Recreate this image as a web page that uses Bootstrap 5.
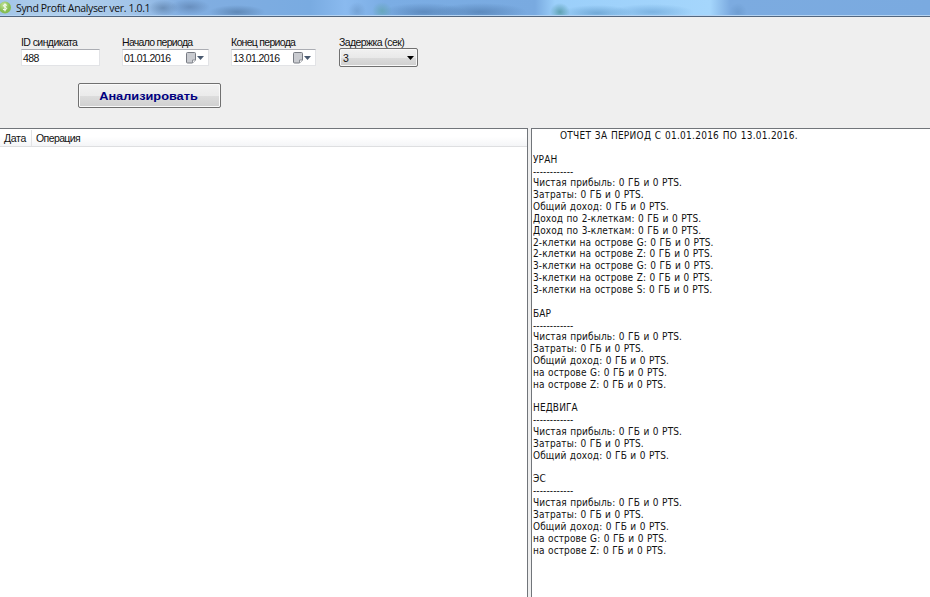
<!DOCTYPE html>
<html lang="ru">
<head>
  <meta charset="UTF-8" />
  <meta name="viewport" content="width=device-width, initial-scale=1.0"/>
  <title>Synd Profit Analyser ver. 1.0.1</title>
  <link href="https://cdn.jsdelivr.net/npm/bootstrap@5.3.2/dist/css/bootstrap.min.css" rel="stylesheet" />
  <style>
    body {
      background-color: #efefef;
      color: #111;
      font-family: "Liberation Sans", Arial, sans-serif;
      font-size: 10.5px;
      line-height: 13px;
      letter-spacing: -0.6px;
    }
    .titlebar {
      height: 17px;
      border-bottom: 1px solid #53677f;
      box-shadow: inset 0 -1px #b5d3f1;
      font-family: "Open Sans", sans-serif;
      font-size: 10.5px;
      letter-spacing: -0.36px;
      background:
        radial-gradient(ellipse 15px 8px at 163px 8px, #4f6f9588, transparent),
        radial-gradient(ellipse 20px 8px at 190px 7px, #5274a088, transparent),
        radial-gradient(ellipse 28px 7px at 237px 12px, #456a9488, transparent),
        radial-gradient(ellipse 9px 9px at 357px 11px, #567fac55, transparent),
        radial-gradient(ellipse 10px 9px at 382px 11px, #5ea3a9aa, transparent),
        radial-gradient(ellipse 42px 9px at 424px 12px, #446e9f88, transparent),
        radial-gradient(ellipse 47px 9px at 480px 12px, #446e9f88, transparent),
        radial-gradient(ellipse 10px 9px at 560px 12px, #408a8faa, transparent),
        radial-gradient(ellipse 36px 8px at 597px 13px, #4d88b988, transparent),
        radial-gradient(ellipse 42px 8px at 652px 12px, #5d97cb88, transparent),
        radial-gradient(ellipse 9px 9px at 738px 12px, #5b8abd66, transparent),
        linear-gradient(90deg, #a2c5e8 0, #b1cfec 60px, #a3c5e9 130px, #82aee1 180px, #79abe1 310px, #8abaef 345px, #7bade4 385px, #79aae0 535px, #9bcffa 555px, #a5d6fc 710px, #7cabe0 730px, #7aaae0 930px);
    }
    .settings {
      height: 111px;
      padding: 19px 0 0 21px;
    }
    .field label {
      display: block;
      height: 13px;
      white-space: nowrap;
      letter-spacing: -0.58px;
    }
    .w-start label, .w-end label {
      letter-spacing: -0.7px;
    }
    .box {
      height: 17px;
      background: #fff;
      border: 1px solid #e2e3e6;
      border-top-color: #abadb3;
      padding: 1px 4px 0 1px;
    }
    .w-id { width: 79px; margin-right: 22px; }
    .w-start { width: 87px; margin-right: 22px; }
    .w-end { width: 85px; margin-right: 23px; }
    .w-delay { width: 79px; }
    .combo {
      height: 19px;
      margin-top: -1px;
      border: 1px solid #707070;
      border-radius: 2px;
      background: linear-gradient(#f1f1f1, #e9e9e9 50%, #dcdcdc 51%, #cfcfcf);
      box-shadow: inset 0 0 0 1px #f8f8f8;
      padding: 1px 3px 0 3px;
    }
    .analyse {
      width: 143px;
      height: 25px;
      margin: 16px 0 0 57px;
      padding: 2px 2px 0 0;
      border: 1px solid #707070;
      border-radius: 2px;
      background: linear-gradient(#f2f2f2, #ebebeb 50%, #dddddd 51%, #d0d0d0);
      box-shadow: inset 0 0 0 1px #fafafa;
      color: #000080;
      font-size: 11px;
      font-weight: bold;
      letter-spacing: 0;
    }
    .analyse span {
      transform: scaleX(1.16);
    }
    .operations {
      width: 528px;
      background: #fff;
      border-top: 1px solid #71757a;
      border-right: 1px solid #71757a;
    }
    .list-head {
      height: 18px;
      padding-top: 1px;
      background: linear-gradient(#fff 45%, #f4f5f7);
      border-bottom: 1px solid #dedfe1;
    }
    .col-date {
      width: 32px;
      padding-left: 4px;
      border-right: 1px solid #e2e3e5;
      letter-spacing: -0.3px;
    }
    .report {
      margin-left: 3px;
      background: #fff;
      border-top: 1px solid #71757a;
      border-left: 1px solid #71757a;
      padding: 1px 0 0 1px;
      font-family: "DejaVu Sans Condensed", "DejaVu Sans", sans-serif;
      font-stretch: condensed;
      font-size: 10px;
      line-height: 11.85px;
      letter-spacing: 0.12px;
      word-spacing: 0.45px;
    }
    .report pre {
      font: inherit;
      overflow: hidden;
    }
    .report-title {
      padding-left: 27px;
      letter-spacing: 0.27px;
    }
  </style>
</head>
<body class="vh-100 overflow-hidden d-flex flex-column">
  <header class="titlebar d-flex align-items-center flex-shrink-0">
    <svg width="12" height="16" viewBox="0 0 12 16">
      <defs>
        <radialGradient id="coin" cx=".4" cy=".3"><stop offset="0" stop-color="#c4e49a"/><stop offset="1" stop-color="#86bd52"/></radialGradient>
      </defs>
      <circle cx="5" cy="7.5" r="6" fill="url(#coin)"/>
      <path d="M7 5.3Q5 4.2 3.6 5.2C2.5 7 7 6.9 6.7 8.8Q5.5 10.6 3 9.5M5 3.4V11.4" fill="none" stroke="#fff" stroke-width="1"/>
    </svg>
    <span class="ms-1">Synd Profit Analyser ver. 1.0.1</span>
  </header>

  <section class="settings flex-shrink-0">
    <div class="d-flex">
      <div class="field w-id">
        <label>ID синдиката</label>
        <div class="box d-flex align-items-center">488</div>
      </div>
      <div class="field w-start">
        <label>Начало периода</label>
        <div class="box d-flex align-items-center justify-content-between">
          <span>01.01.2016</span>
          <svg width="19" height="12" viewBox="0 0 19 12"><path d="M2.500.5h7q1 0 1 1v6.500l-3 3h-5q-1 0-1-1v-8.500q0-1 1-1z" fill="#c9cbd0" stroke="#777b83"/><path d="M10.500 8h-3v3" fill="#fff" stroke="#8b8f96"/><path d="M12 4h7l-3.500 4z" fill="#4a5a70"/></svg>
        </div>
      </div>
      <div class="field w-end">
        <label>Конец периода</label>
        <div class="box d-flex align-items-center justify-content-between">
          <span>13.01.2016</span>
          <svg width="19" height="12" viewBox="0 0 19 12"><path d="M2.500.5h7q1 0 1 1v6.500l-3 3h-5q-1 0-1-1v-8.500q0-1 1-1z" fill="#c9cbd0" stroke="#777b83"/><path d="M10.500 8h-3v3" fill="#fff" stroke="#8b8f96"/><path d="M12 4h7l-3.500 4z" fill="#4a5a70"/></svg>
        </div>
      </div>
      <div class="field w-delay">
        <label>Задержка (сек)</label>
        <div class="combo d-flex align-items-center justify-content-between">
          <span>3</span>
          <svg width="7" height="4" viewBox="0 0 7 4"><path d="M0 0h7l-3.500 4z" fill="#000"/></svg>
        </div>
      </div>
    </div>
    <button class="analyse d-flex align-items-center justify-content-center" type="button"><span>Анализировать</span></button>
  </section>

  <main class="d-flex flex-grow-1">
    <section class="operations flex-shrink-0">
      <div class="list-head d-flex">
        <div class="col-date d-flex align-items-center">Дата</div>
        <div class="ps-1 d-flex align-items-center">Операция</div>
      </div>
    </section>
    <section class="report flex-grow-1">
      <div class="report-title">ОТЧЕТ ЗА ПЕРИОД С 01.01.2016 ПО 13.01.2016.</div>
      <pre class="m-0">

УРАН
------------
Чистая прибыль: 0 ГБ и 0 PTS.
Затраты: 0 ГБ и 0 PTS.
Общий доход: 0 ГБ и 0 PTS.
Доход по 2-клеткам: 0 ГБ и 0 PTS.
Доход по 3-клеткам: 0 ГБ и 0 PTS.
2-клетки на острове G: 0 ГБ и 0 PTS.
2-клетки на острове Z: 0 ГБ и 0 PTS.
3-клетки на острове G: 0 ГБ и 0 PTS.
3-клетки на острове Z: 0 ГБ и 0 PTS.
3-клетки на острове S: 0 ГБ и 0 PTS.

БАР
------------
Чистая прибыль: 0 ГБ и 0 PTS.
Затраты: 0 ГБ и 0 PTS.
Общий доход: 0 ГБ и 0 PTS.
на острове G: 0 ГБ и 0 PTS.
на острове Z: 0 ГБ и 0 PTS.

НЕДВИГА
------------
Чистая прибыль: 0 ГБ и 0 PTS.
Затраты: 0 ГБ и 0 PTS.
Общий доход: 0 ГБ и 0 PTS.

ЭС
------------
Чистая прибыль: 0 ГБ и 0 PTS.
Затраты: 0 ГБ и 0 PTS.
Общий доход: 0 ГБ и 0 PTS.
на острове G: 0 ГБ и 0 PTS.
на острове Z: 0 ГБ и 0 PTS.</pre>
    </section>
  </main>
  <script src="https://cdn.jsdelivr.net/npm/bootstrap@5.3.2/dist/js/bootstrap.bundle.min.js"></script>
</body>
</html>
